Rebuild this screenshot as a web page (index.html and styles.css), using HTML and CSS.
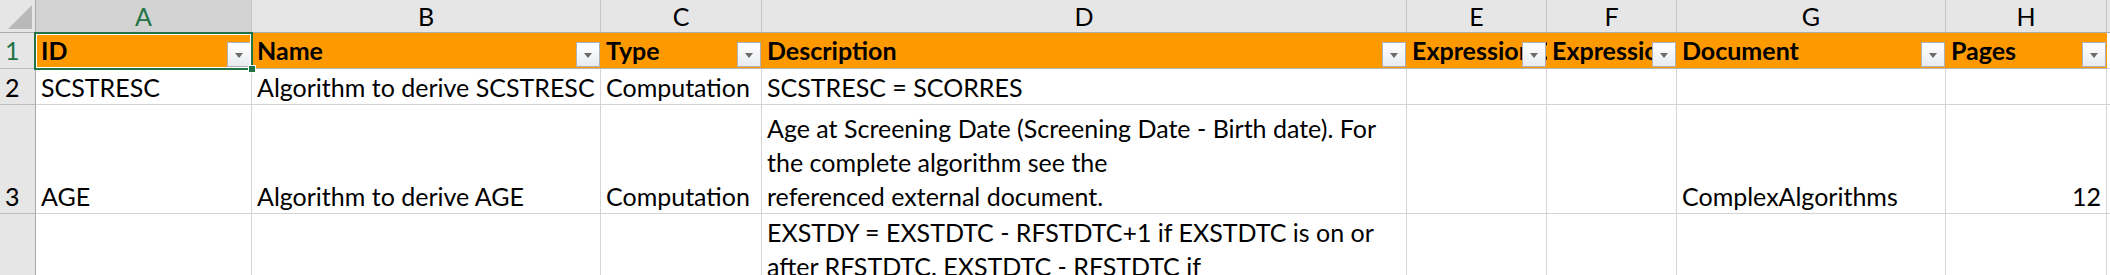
FILE: index.html
```html
<!DOCTYPE html>
<html>
<head>
<meta charset="utf-8">
<link rel="stylesheet" href="styles.css">
</head>
<body>
<div class="sheet">
  <div class="corner"><div class="tri"></div></div>
  <div class="ch ch-sel">A</div>
  <div class="ch">B</div>
  <div class="ch">C</div>
  <div class="ch">D</div>
  <div class="ch">E</div>
  <div class="ch">F</div>
  <div class="ch">G</div>
  <div class="ch">H</div>
  <div class="ch ch-last"></div>

  <div class="rh rh-sel">1</div>
  <div class="c hd sel"><span class="t">ID</span><i class="fb"></i><b class="handle"></b></div>
  <div class="c hd"><span class="t">Name</span><i class="fb"></i></div>
  <div class="c hd"><span class="t">Type</span><i class="fb"></i></div>
  <div class="c hd"><span class="t">Description</span><i class="fb"></i></div>
  <div class="c hd"><span class="t">Expression Context</span><i class="fb"></i></div>
  <div class="c hd"><span class="t">Expression Code</span><i class="fb"></i></div>
  <div class="c hd"><span class="t">Document</span><i class="fb"></i></div>
  <div class="c hd"><span class="t">Pages</span><i class="fb"></i></div>
  <div class="c"></div>

  <div class="rh">2</div>
  <div class="c"><span class="t">SCSTRESC</span></div>
  <div class="c"><span class="t">Algorithm to derive SCSTRESC</span></div>
  <div class="c"><span class="t">Computation</span></div>
  <div class="c"><span class="t">SCSTRESC = SCORRES</span></div>
  <div class="c"></div>
  <div class="c"></div>
  <div class="c"></div>
  <div class="c"></div>
  <div class="c"></div>

  <div class="rh">3</div>
  <div class="c"><span class="t">AGE</span></div>
  <div class="c"><span class="t">Algorithm to derive AGE</span></div>
  <div class="c"><span class="t">Computation</span></div>
  <div class="c"><span class="t">Age at Screening Date (Screening Date - Birth date). For<br>the complete algorithm see the<br>referenced external document.</span></div>
  <div class="c"></div>
  <div class="c"></div>
  <div class="c"><span class="t">ComplexAlgorithms</span></div>
  <div class="c num"><span class="t">12</span></div>
  <div class="c"></div>

  <div class="rh"></div>
  <div class="c"></div>
  <div class="c"></div>
  <div class="c"></div>
  <div class="c"><span class="t">EXSTDY = EXSTDTC - RFSTDTC+1 if EXSTDTC is on or<br>after RFSTDTC. EXSTDTC - RFSTDTC if<br>EXSTDTC precedes RFSTDTC.</span></div>
  <div class="c"></div>
  <div class="c"></div>
  <div class="c"></div>
  <div class="c"></div>
  <div class="c"></div>
</div>
</body>
</html>
```
FILE: styles.css
```css
html, body {
  margin: 0;
  padding: 0;
  background: #ffffff;
}
body {
  font-family: Lato, "Liberation Sans", sans-serif;
  font-size: 25px;
  color: #000;
  overflow: hidden;
}
.sheet {
  display: grid;
  grid-template-columns: 36px 216px 349px 161px 645px 140px 130px 269px 161px 1fr;
  grid-template-rows: 33px 36px 36px 109px 104px;
  width: 2110px;
}
.corner {
  background: #e6e6e6;
  border-right: 1px solid #ababab;
  border-bottom: 1px solid #ababab;
  box-sizing: border-box;
  position: relative;
}
.tri {
  position: absolute;
  right: 3px;
  bottom: 3px;
  width: 0;
  height: 0;
  border-left: 24px solid transparent;
  border-bottom: 24px solid #b9b9b9;
}
.ch {
  background: #e6e6e6;
  border-right: 1px solid #c6c6c6;
  border-bottom: 1px solid #ababab;
  box-sizing: border-box;
  display: flex;
  align-items: center;
  justify-content: center;
  line-height: 1;
  padding-top: 1px;
}
.ch-sel {
  background: #d2d2d2;
  color: #217346;
}
.ch-last {
  border-right: none;
}
.rh {
  background: #e6e6e6;
  border-right: 1px solid #ababab;
  border-bottom: 1px solid #bdbdbd;
  box-sizing: border-box;
  display: flex;
  align-items: flex-end;
  padding: 0 0 0 5px;
  line-height: 34px;
}
.rh-sel {
  color: #217346;
  padding-bottom: 1px;
}
.c {
  border-right: 1px solid #d4d4d4;
  border-bottom: 1px solid #d4d4d4;
  box-sizing: border-box;
  display: flex;
  align-items: flex-end;
  padding: 0 5px 0 5px;
  line-height: 34px;
  white-space: nowrap;
  overflow: hidden;
  position: relative;
}
.num {
  justify-content: flex-end;
}
.hd {
  background: #ff9900;
  border-right: none;
  border-bottom: 1px solid #b8b8b8;
  font-weight: bold;
  padding-bottom: 1px;
}
.sel {
  overflow: visible;
  z-index: 2;
}
.sel::after {
  content: "";
  position: absolute;
  left: -2px;
  top: -1px;
  right: -1px;
  bottom: -2px;
  border: 2px solid #217346;
  box-shadow: inset 0 0 0 1px #ffffff;
  pointer-events: none;
}
.handle {
  position: absolute;
  right: -4px;
  bottom: -5px;
  width: 6px;
  height: 6px;
  background: #217346;
  border: 1px solid #ffffff;
  z-index: 3;
}
.fb {
  position: absolute;
  right: 1px;
  bottom: 1px;
  width: 24px;
  height: 25px;
  box-sizing: border-box;
  border: 1px solid #aeb2b8;
  background: linear-gradient(#ffffff, #e9ebef);
  display: flex;
  align-items: center;
  justify-content: center;
}
.fb::before {
  content: "";
  width: 0;
  height: 0;
  border-left: 4px solid transparent;
  border-right: 4px solid transparent;
  border-top: 5px solid #6b6b6b;
  margin-top: 1px;
}
```
